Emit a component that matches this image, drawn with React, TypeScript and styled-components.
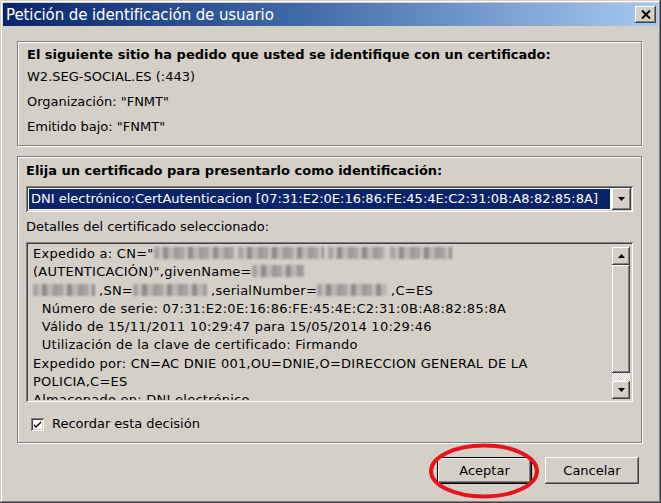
import styled, { createGlobalStyle } from "styled-components";

const GlobalStyle = createGlobalStyle`
  html, body {
    margin: 0;
    padding: 0;
    background: #d4d0c8;
  }
  body {
    font-family: "DejaVu Sans", "Liberation Sans", sans-serif;
  }
`;

const FACE = "#d4d0c8";

const raised = `
  box-shadow: inset -1px -1px #404040, inset 1px 1px #fff,
    inset -2px -2px #808080, inset 2px 2px ${FACE};
`;

const sunken = `
  box-shadow: inset 1px 1px #808080, inset -1px -1px #fff,
    inset 2px 2px #404040, inset -2px -2px ${FACE};
`;

const Window = styled.div`
  width: 661px;
  height: 503px;
  box-sizing: border-box;
  padding: 3px;
  background: ${FACE};
  box-shadow: inset -1px -1px #404040, inset 1px 1px ${FACE},
    inset -2px -2px #808080, inset 2px 2px #fff;
  display: flex;
  flex-direction: column;
  font-size: 13px;
  color: #000;
`;

const TitleBar = styled.div`
  height: 23px;
  display: flex;
  align-items: center;
  justify-content: space-between;
  padding: 0 2px 0 3px;
  background: linear-gradient(90deg, #0a246a 0%, #3f6aa8 45%, #a6caf0 100%);
`;

const Title = styled.span`
  color: #fff;
  font-size: 15px;
  letter-spacing: -0.1px;
`;

const CloseButton = styled.div`
  width: 21px;
  height: 17px;
  background: ${FACE};
  ${raised}
  display: flex;
  align-items: center;
  justify-content: center;
`;

const Body = styled.div`
  flex: 1;
  display: flex;
  flex-direction: column;
  padding: 15px 16px 0 14px;
`;

const GroupBox = styled.div<{ $gap?: number }>`
  border: 1px solid #808080;
  box-shadow: inset 1px 1px #fff, 1px 1px #fff;
  margin-bottom: ${(p) => p.$gap ?? 0}px;
  display: flex;
  flex-direction: column;
`;

const InfoBox = styled(GroupBox)`
  padding: 4px 9px 6px;
`;

const CertBox = styled(GroupBox)`
  padding: 5px 8px 9px 8px;
`;

const Heading = styled.div`
  font-weight: bold;
  line-height: 18px;
`;

const InfoLine = styled.div`
  line-height: 25px;
`;

const Select = styled.div`
  margin-top: 6px;
  height: 26px;
  box-sizing: border-box;
  padding: 2px;
  background: #fff;
  ${sunken}
  display: flex;
`;

const SelectValue = styled.div`
  flex: 1;
  margin: 1px 2px 1px 1px;
  background: #0a246a;
  color: #fff;
  padding-left: 2px;
  line-height: 20px;
  white-space: nowrap;
  overflow: hidden;
`;

const ArrowButton = styled.div`
  width: 19px;
  background: ${FACE};
  ${raised}
  display: flex;
  align-items: center;
  justify-content: center;
`;

const Label = styled.div`
  margin-top: 6px;
  line-height: 18px;
`;

const Details = styled.div`
  margin-top: 6px;
  height: 160px;
  box-sizing: border-box;
  padding: 2px;
  ${sunken}
  display: flex;
`;

const DetailsText = styled.div`
  flex: 1;
  padding: 1px 0 0 5px;
  line-height: 18.3px;
  letter-spacing: 0.25px;
  white-space: pre;
  overflow: hidden;
`;

const Scrollbar = styled.div`
  width: 18px;
  margin: 3px 1px 1px 0;
  display: flex;
  flex-direction: column;
  background-color: #fff;
  background-image: repeating-conic-gradient(${FACE} 0 25%, #fff 0 50%);
  background-size: 2px 2px;
`;

const ScrollButton = styled.div`
  height: 18px;
  background: ${FACE};
  ${raised}
  display: flex;
  align-items: center;
  justify-content: center;
`;

const Thumb = styled.div`
  height: 108px;
  background: ${FACE};
  ${raised}
`;

const Track = styled.div`
  flex: 1;
`;

const Redacted = styled.span<{ $w: number }>`
  display: inline-block;
  width: ${(p) => p.$w}px;
  height: 12px;
  vertical-align: -1px;
  margin-right: 4px;
  background: repeating-linear-gradient(
    90deg,
    #a6a4a0 0 5px,
    #c3c0ba 5px 9px,
    #8f8d89 9px 14px,
    #bab7b1 14px 20px,
    #9d9b97 20px 25px
  );
  filter: blur(1px);
`;

const CheckRow = styled.label`
  margin-top: 13px;
  display: flex;
  align-items: center;
  gap: 8px;
  padding-left: 5px;
  line-height: 18px;
`;

const CheckBox = styled.span`
  width: 13px;
  height: 13px;
  box-sizing: border-box;
  background: #fff;
  ${sunken}
  display: flex;
  align-items: center;
  justify-content: center;
`;

const ButtonRow = styled.div`
  display: flex;
  justify-content: flex-end;
  gap: 13px;
  margin-top: 14px;
  padding-right: 3px;
`;

const ButtonWrap = styled.div`
  position: relative;
`;

const Button = styled.button<{ $default?: boolean }>`
  width: ${(p) => (p.$default ? 95 : 94)}px;
  height: 27px;
  border: none;
  font: inherit;
  color: #000;
  background: ${FACE};
  box-shadow: ${(p) =>
    p.$default
      ? `inset 0 0 0 1px #000, inset -2px -2px #404040, inset 2px 2px #fff, inset -3px -3px #808080`
      : `inset -1px -1px #404040, inset 1px 1px #fff, inset -2px -2px #808080`};
`;

const Ellipse = styled.svg`
  position: absolute;
  left: -9px;
  top: -14px;
  pointer-events: none;
`;

function Triangle({ up }: { up?: boolean }) {
  return (
    <svg width="7" height="4" viewBox="0 0 7 4">
      <polygon points={up ? "3.5,0 7,4 0,4" : "0,0 7,0 3.5,4"} fill="#000" />
    </svg>
  );
}

export default function App() {
  return (
    <>
      <GlobalStyle />
      <Window>
        <TitleBar>
          <Title>Petición de identificación de usuario</Title>
          <CloseButton>
            <svg width="10" height="9" viewBox="0 0 10 9">
              <path d="M1 0.5 L9 8.5 M9 0.5 L1 8.5" stroke="#000" strokeWidth="2" />
            </svg>
          </CloseButton>
        </TitleBar>
        <Body>
          <InfoBox $gap={10}>
            <Heading>El siguiente sitio ha pedido que usted se identifique con un certificado:</Heading>
            <InfoLine>W2.SEG-SOCIAL.ES (:443)</InfoLine>
            <InfoLine>Organización: "FNMT"</InfoLine>
            <InfoLine>Emitido bajo: "FNMT"</InfoLine>
          </InfoBox>
          <CertBox>
            <Heading>Elija un certificado para presentarlo como identificación:</Heading>
            <Select>
              <SelectValue>
                DNI electrónico:CertAutenticacion [07:31:E2:0E:16:86:FE:45:4E:C2:31:0B:A8:82:85:8A]
              </SelectValue>
              <ArrowButton>
                <Triangle />
              </ArrowButton>
            </Select>
            <Label>Detalles del certificado seleccionado:</Label>
            <Details>
              <DetailsText>
                <div>
                  Expedido a: CN="<Redacted $w={80} />
                  <Redacted $w={86} />
                  <Redacted $w={58} />
                  <Redacted $w={62} />
                </div>
                <div>
                  (AUTENTICACIÓN)",givenName=<Redacted $w={52} />
                </div>
                <div>
                  <Redacted $w={62} />,SN=<Redacted $w={74} />,serialNumber=<Redacted $w={70} />,C=ES
                </div>
                <div>  Número de serie: 07:31:E2:0E:16:86:FE:45:4E:C2:31:0B:A8:82:85:8A</div>
                <div>  Válido de 15/11/2011 10:29:47 para 15/05/2014 10:29:46</div>
                <div>  Utilización de la clave de certificado: Firmando</div>
                <div>Expedido por: CN=AC DNIE 001,OU=DNIE,O=DIRECCION GENERAL DE LA</div>
                <div>POLICIA,C=ES</div>
                <div>Almacenado en: DNI electrónico</div>
              </DetailsText>
              <Scrollbar>
                <ScrollButton>
                  <Triangle up />
                </ScrollButton>
                <Thumb />
                <Track />
                <ScrollButton>
                  <Triangle />
                </ScrollButton>
              </Scrollbar>
            </Details>
            <CheckRow>
              <CheckBox>
                <svg width="7" height="7" viewBox="0 0 7 7">
                  <path d="M0 3 L2 5 L7 0 L7 2 L2 7 L0 5 Z" fill="#000" />
                </svg>
              </CheckBox>
              Recordar esta decisión
            </CheckRow>
          </CertBox>
          <ButtonRow>
            <ButtonWrap>
              <Button $default>Aceptar</Button>
              <Ellipse width="112" height="56" viewBox="0 0 112 56">
                <ellipse cx="56" cy="28" rx="53" ry="25.5" fill="none" stroke="#e8141b" strokeWidth="4" />
              </Ellipse>
            </ButtonWrap>
            <ButtonWrap>
              <Button>Cancelar</Button>
            </ButtonWrap>
          </ButtonRow>
        </Body>
      </Window>
    </>
  );
}
